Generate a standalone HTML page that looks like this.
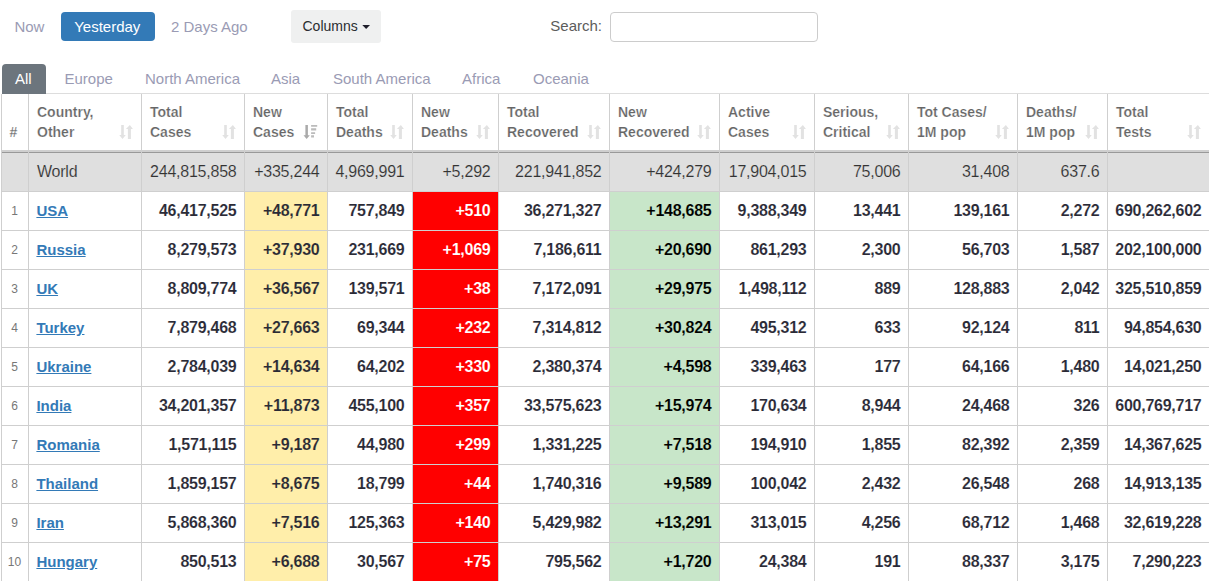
<!DOCTYPE html>
<html><head><meta charset="utf-8"><style>
*{box-sizing:border-box}
html,body{margin:0;padding:0;background:#fff;overflow:hidden}
body{width:1209px;height:581px;position:relative;font-family:"Liberation Sans",sans-serif;}
.a{position:absolute}
.txt{position:absolute;white-space:nowrap;line-height:20px}
.nav{font-size:15px;color:#9a9bb4}
.btn{position:absolute;border-radius:4px}
.hd{position:absolute;font-size:14px;font-weight:bold;color:#666;-webkit-text-stroke:0.2px #fff;line-height:20px;white-space:nowrap}
.vl{position:absolute;width:1px;background:#cfcfcf}
.hl{position:absolute;height:1px;background:#cfcfcf}
.c{position:absolute;white-space:nowrap;text-align:right;font-size:16px;letter-spacing:-0.25px;font-weight:bold;color:#2a2a36;line-height:20px}
.w{font-weight:normal;color:#333;letter-spacing:-0.23px;-webkit-text-stroke:0.15px #dfdfdf}
.n{position:absolute;font-size:12px;color:#777;text-align:center;line-height:20px}
.ct{position:absolute;white-space:nowrap;font-size:15px;font-weight:bold;color:#337ab7;text-decoration:underline;line-height:20px}
svg{position:absolute}
</style></head><body>

<div class="txt nav" style="left:14.4px;top:17px">Now</div>
<div class="btn" style="left:61px;top:12px;width:94px;height:29px;background:#337ab7"></div>
<div class="txt" style="left:74.2px;top:17px;font-size:15px;color:#fff">Yesterday</div>
<div class="txt nav" style="left:171px;top:17px">2 Days Ago</div>
<div class="btn" style="left:291px;top:10px;width:90px;height:33px;background:#eff0f0;border-radius:3px"></div>
<div class="txt" style="left:302.5px;top:16px;font-size:14px;color:#2a2d31">Columns</div>
<svg style="left:362px;top:25px" width="9" height="6"><path d="M0.3 0 L8 0 L4.15 4 Z" fill="#1e1e2a"/></svg>
<div class="txt" style="left:550.3px;top:16px;font-size:15px;color:#5c5c5c">Search:</div>
<div class="a" style="left:610px;top:12px;width:208px;height:30px;border:1px solid #ccc;border-radius:4px"></div>
<div class="txt nav" style="left:64.5px;top:69px">Europe</div>
<div class="txt nav" style="left:145px;top:69px">North America</div>
<div class="txt nav" style="left:271px;top:69px">Asia</div>
<div class="txt nav" style="left:333px;top:69px">South America</div>
<div class="txt nav" style="left:462px;top:69px">Africa</div>
<div class="txt nav" style="left:533px;top:69px">Oceania</div>
<div class="a" style="left:2px;top:153px;width:1207px;height:38px;background:#dfdfdf"></div>
<div class="a" style="left:245px;top:191px;width:82px;height:390px;background:#ffeeaa"></div>
<div class="a" style="left:413px;top:191px;width:85px;height:390px;background:#ff0000"></div>
<div class="a" style="left:610px;top:191px;width:109px;height:390px;background:#c8e6c9"></div>
<div class="hl" style="left:2px;top:93px;width:1207px;background:#ddd"></div>
<div class="a" style="left:2px;top:150px;width:1207px;height:2px;background:#cfcfcf"></div>
<div class="a" style="left:2px;top:152px;width:1207px;height:1px;background:#999"></div>
<div class="hl" style="left:2px;top:191px;width:1207px"></div>
<div class="hl" style="left:2px;top:230px;width:1207px"></div>
<div class="hl" style="left:2px;top:269px;width:1207px"></div>
<div class="hl" style="left:2px;top:308px;width:1207px"></div>
<div class="hl" style="left:2px;top:347px;width:1207px"></div>
<div class="hl" style="left:2px;top:386px;width:1207px"></div>
<div class="hl" style="left:2px;top:425px;width:1207px"></div>
<div class="hl" style="left:2px;top:464px;width:1207px"></div>
<div class="hl" style="left:2px;top:503px;width:1207px"></div>
<div class="hl" style="left:2px;top:542px;width:1207px"></div>
<div class="hl" style="left:2px;top:581px;width:1207px"></div>
<div class="vl" style="left:1px;top:94px;height:487px"></div>
<div class="vl" style="left:28px;top:94px;height:487px"></div>
<div class="vl" style="left:141px;top:94px;height:487px"></div>
<div class="vl" style="left:244px;top:94px;height:487px"></div>
<div class="vl" style="left:327px;top:94px;height:487px"></div>
<div class="vl" style="left:412px;top:94px;height:487px"></div>
<div class="vl" style="left:498px;top:94px;height:487px"></div>
<div class="vl" style="left:609px;top:94px;height:487px"></div>
<div class="vl" style="left:719px;top:94px;height:487px"></div>
<div class="vl" style="left:814px;top:94px;height:487px"></div>
<div class="vl" style="left:908px;top:94px;height:487px"></div>
<div class="vl" style="left:1017px;top:94px;height:487px"></div>
<div class="vl" style="left:1107px;top:94px;height:487px"></div>
<div class="a" style="left:2px;top:64px;width:44px;height:30px;background:#6c757d;border-radius:4px 4px 0 0"></div>
<div class="txt" style="left:15px;top:69px;font-size:15px;color:#fff">All</div>
<div class="hd" style="left:0px;width:27px;top:122px;text-align:center">#</div>
<div class="hd" style="left:37px;top:102px">Country,<br>Other</div>
<div class="a" style="left:119px;top:125px;width:16px;height:15px"><svg width="16" height="15" viewBox="0 0 16 15"><path d="M2.2 0H4.8V10H6.8L3.5 14L0.2 10H2.2Z" fill="#e2e2e2"/><path d="M8.9 14H11.9V4H13.9L10.9 0L6.9 4H8.9Z" fill="#e2e2e2"/></svg></div>
<div class="hd" style="left:150px;top:102px">Total<br>Cases</div>
<div class="a" style="left:222px;top:125px;width:16px;height:15px"><svg width="16" height="15" viewBox="0 0 16 15"><path d="M2.2 0H4.8V10H6.8L3.5 14L0.2 10H2.2Z" fill="#e2e2e2"/><path d="M8.9 14H11.9V4H13.9L10.9 0L6.9 4H8.9Z" fill="#e2e2e2"/></svg></div>
<div class="hd" style="left:253px;top:102px">New<br>Cases</div>
<div class="a" style="left:303px;top:125px;width:16px;height:15px"><svg width="16" height="15" viewBox="0 0 16 15"><path d="M2.4 0H4.9V10.3H6.8L3.65 14L0.5 10.3H2.4Z" fill="#aaa"/><path d="M8.1 0H14.2V1.8H8.1ZM8.1 3.2H13.2V5.6H8.1ZM8.1 7.2H12.1V9H8.1ZM8.1 10.3H11V12.5H8.1Z" fill="#bbb"/></svg></div>
<div class="hd" style="left:336px;top:102px">Total<br>Deaths</div>
<div class="a" style="left:390px;top:125px;width:16px;height:15px"><svg width="16" height="15" viewBox="0 0 16 15"><path d="M2.2 0H4.8V10H6.8L3.5 14L0.2 10H2.2Z" fill="#e2e2e2"/><path d="M8.9 14H11.9V4H13.9L10.9 0L6.9 4H8.9Z" fill="#e2e2e2"/></svg></div>
<div class="hd" style="left:421px;top:102px">New<br>Deaths</div>
<div class="a" style="left:476px;top:125px;width:16px;height:15px"><svg width="16" height="15" viewBox="0 0 16 15"><path d="M2.2 0H4.8V10H6.8L3.5 14L0.2 10H2.2Z" fill="#e2e2e2"/><path d="M8.9 14H11.9V4H13.9L10.9 0L6.9 4H8.9Z" fill="#e2e2e2"/></svg></div>
<div class="hd" style="left:507px;top:102px">Total<br>Recovered</div>
<div class="a" style="left:587px;top:125px;width:16px;height:15px"><svg width="16" height="15" viewBox="0 0 16 15"><path d="M2.2 0H4.8V10H6.8L3.5 14L0.2 10H2.2Z" fill="#e2e2e2"/><path d="M8.9 14H11.9V4H13.9L10.9 0L6.9 4H8.9Z" fill="#e2e2e2"/></svg></div>
<div class="hd" style="left:618px;top:102px">New<br>Recovered</div>
<div class="a" style="left:697px;top:125px;width:16px;height:15px"><svg width="16" height="15" viewBox="0 0 16 15"><path d="M2.2 0H4.8V10H6.8L3.5 14L0.2 10H2.2Z" fill="#e2e2e2"/><path d="M8.9 14H11.9V4H13.9L10.9 0L6.9 4H8.9Z" fill="#e2e2e2"/></svg></div>
<div class="hd" style="left:728px;top:102px">Active<br>Cases</div>
<div class="a" style="left:792px;top:125px;width:16px;height:15px"><svg width="16" height="15" viewBox="0 0 16 15"><path d="M2.2 0H4.8V10H6.8L3.5 14L0.2 10H2.2Z" fill="#e2e2e2"/><path d="M8.9 14H11.9V4H13.9L10.9 0L6.9 4H8.9Z" fill="#e2e2e2"/></svg></div>
<div class="hd" style="left:823px;top:102px">Serious,<br>Critical</div>
<div class="a" style="left:886px;top:125px;width:16px;height:15px"><svg width="16" height="15" viewBox="0 0 16 15"><path d="M2.2 0H4.8V10H6.8L3.5 14L0.2 10H2.2Z" fill="#e2e2e2"/><path d="M8.9 14H11.9V4H13.9L10.9 0L6.9 4H8.9Z" fill="#e2e2e2"/></svg></div>
<div class="hd" style="left:917px;top:102px">Tot&nbsp;Cases/<br>1M pop</div>
<div class="a" style="left:995px;top:125px;width:16px;height:15px"><svg width="16" height="15" viewBox="0 0 16 15"><path d="M2.2 0H4.8V10H6.8L3.5 14L0.2 10H2.2Z" fill="#e2e2e2"/><path d="M8.9 14H11.9V4H13.9L10.9 0L6.9 4H8.9Z" fill="#e2e2e2"/></svg></div>
<div class="hd" style="left:1026px;top:102px">Deaths/<br>1M pop</div>
<div class="a" style="left:1085px;top:125px;width:16px;height:15px"><svg width="16" height="15" viewBox="0 0 16 15"><path d="M2.2 0H4.8V10H6.8L3.5 14L0.2 10H2.2Z" fill="#e2e2e2"/><path d="M8.9 14H11.9V4H13.9L10.9 0L6.9 4H8.9Z" fill="#e2e2e2"/></svg></div>
<div class="hd" style="left:1116px;top:102px">Total<br>Tests</div>
<div class="a" style="left:1187px;top:125px;width:16px;height:15px"><svg width="16" height="15" viewBox="0 0 16 15"><path d="M2.2 0H4.8V10H6.8L3.5 14L0.2 10H2.2Z" fill="#e2e2e2"/><path d="M8.9 14H11.9V4H13.9L10.9 0L6.9 4H8.9Z" fill="#e2e2e2"/></svg></div>
<div class="c w" style="left:37px;top:162px;text-align:left">World</div>
<div class="c w" style="right:972.5px;top:162px">244,815,858</div>
<div class="c w" style="right:889.5px;top:162px">+335,244</div>
<div class="c w" style="right:804.5px;top:162px">4,969,991</div>
<div class="c w" style="right:718.5px;top:162px">+5,292</div>
<div class="c w" style="right:607.5px;top:162px">221,941,852</div>
<div class="c w" style="right:497.5px;top:162px">+424,279</div>
<div class="c w" style="right:402.5px;top:162px">17,904,015</div>
<div class="c w" style="right:308.5px;top:162px">75,006</div>
<div class="c w" style="right:199.5px;top:162px">31,408</div>
<div class="c w" style="right:109.5px;top:162px">637.6</div>
<div class="n" style="left:1px;width:27px;top:201px">1</div>
<a class="ct" style="left:36.4px;top:201px">USA</a>
<div class="c" style="right:972.5px;top:201px;-webkit-text-stroke:0.1px #fff">46,417,525</div>
<div class="c" style="right:889.5px;top:201px;-webkit-text-stroke:0.1px #ffeeaa">+48,771</div>
<div class="c" style="right:804.5px;top:201px;-webkit-text-stroke:0.1px #fff">757,849</div>
<div class="c" style="right:718.5px;top:201px;color:#fff;-webkit-text-stroke:0.1px #ff0000">+510</div>
<div class="c" style="right:607.5px;top:201px;-webkit-text-stroke:0.1px #fff">36,271,327</div>
<div class="c" style="right:497.5px;top:201px;color:#000;-webkit-text-stroke:0.1px #c8e6c9">+148,685</div>
<div class="c" style="right:402.5px;top:201px;-webkit-text-stroke:0.1px #fff">9,388,349</div>
<div class="c" style="right:308.5px;top:201px;-webkit-text-stroke:0.1px #fff">13,441</div>
<div class="c" style="right:199.5px;top:201px;-webkit-text-stroke:0.1px #fff">139,161</div>
<div class="c" style="right:109.5px;top:201px;-webkit-text-stroke:0.1px #fff">2,272</div>
<div class="c" style="right:7.5px;top:201px;-webkit-text-stroke:0.1px #fff">690,262,602</div>
<div class="n" style="left:1px;width:27px;top:240px">2</div>
<a class="ct" style="left:36.4px;top:240px">Russia</a>
<div class="c" style="right:972.5px;top:240px;-webkit-text-stroke:0.1px #fff">8,279,573</div>
<div class="c" style="right:889.5px;top:240px;-webkit-text-stroke:0.1px #ffeeaa">+37,930</div>
<div class="c" style="right:804.5px;top:240px;-webkit-text-stroke:0.1px #fff">231,669</div>
<div class="c" style="right:718.5px;top:240px;color:#fff;-webkit-text-stroke:0.1px #ff0000">+1,069</div>
<div class="c" style="right:607.5px;top:240px;-webkit-text-stroke:0.1px #fff">7,186,611</div>
<div class="c" style="right:497.5px;top:240px;color:#000;-webkit-text-stroke:0.1px #c8e6c9">+20,690</div>
<div class="c" style="right:402.5px;top:240px;-webkit-text-stroke:0.1px #fff">861,293</div>
<div class="c" style="right:308.5px;top:240px;-webkit-text-stroke:0.1px #fff">2,300</div>
<div class="c" style="right:199.5px;top:240px;-webkit-text-stroke:0.1px #fff">56,703</div>
<div class="c" style="right:109.5px;top:240px;-webkit-text-stroke:0.1px #fff">1,587</div>
<div class="c" style="right:7.5px;top:240px;-webkit-text-stroke:0.1px #fff">202,100,000</div>
<div class="n" style="left:1px;width:27px;top:279px">3</div>
<a class="ct" style="left:36.4px;top:279px">UK</a>
<div class="c" style="right:972.5px;top:279px;-webkit-text-stroke:0.1px #fff">8,809,774</div>
<div class="c" style="right:889.5px;top:279px;-webkit-text-stroke:0.1px #ffeeaa">+36,567</div>
<div class="c" style="right:804.5px;top:279px;-webkit-text-stroke:0.1px #fff">139,571</div>
<div class="c" style="right:718.5px;top:279px;color:#fff;-webkit-text-stroke:0.1px #ff0000">+38</div>
<div class="c" style="right:607.5px;top:279px;-webkit-text-stroke:0.1px #fff">7,172,091</div>
<div class="c" style="right:497.5px;top:279px;color:#000;-webkit-text-stroke:0.1px #c8e6c9">+29,975</div>
<div class="c" style="right:402.5px;top:279px;-webkit-text-stroke:0.1px #fff">1,498,112</div>
<div class="c" style="right:308.5px;top:279px;-webkit-text-stroke:0.1px #fff">889</div>
<div class="c" style="right:199.5px;top:279px;-webkit-text-stroke:0.1px #fff">128,883</div>
<div class="c" style="right:109.5px;top:279px;-webkit-text-stroke:0.1px #fff">2,042</div>
<div class="c" style="right:7.5px;top:279px;-webkit-text-stroke:0.1px #fff">325,510,859</div>
<div class="n" style="left:1px;width:27px;top:318px">4</div>
<a class="ct" style="left:36.4px;top:318px">Turkey</a>
<div class="c" style="right:972.5px;top:318px;-webkit-text-stroke:0.1px #fff">7,879,468</div>
<div class="c" style="right:889.5px;top:318px;-webkit-text-stroke:0.1px #ffeeaa">+27,663</div>
<div class="c" style="right:804.5px;top:318px;-webkit-text-stroke:0.1px #fff">69,344</div>
<div class="c" style="right:718.5px;top:318px;color:#fff;-webkit-text-stroke:0.1px #ff0000">+232</div>
<div class="c" style="right:607.5px;top:318px;-webkit-text-stroke:0.1px #fff">7,314,812</div>
<div class="c" style="right:497.5px;top:318px;color:#000;-webkit-text-stroke:0.1px #c8e6c9">+30,824</div>
<div class="c" style="right:402.5px;top:318px;-webkit-text-stroke:0.1px #fff">495,312</div>
<div class="c" style="right:308.5px;top:318px;-webkit-text-stroke:0.1px #fff">633</div>
<div class="c" style="right:199.5px;top:318px;-webkit-text-stroke:0.1px #fff">92,124</div>
<div class="c" style="right:109.5px;top:318px;-webkit-text-stroke:0.1px #fff">811</div>
<div class="c" style="right:7.5px;top:318px;-webkit-text-stroke:0.1px #fff">94,854,630</div>
<div class="n" style="left:1px;width:27px;top:357px">5</div>
<a class="ct" style="left:36.4px;top:357px">Ukraine</a>
<div class="c" style="right:972.5px;top:357px;-webkit-text-stroke:0.1px #fff">2,784,039</div>
<div class="c" style="right:889.5px;top:357px;-webkit-text-stroke:0.1px #ffeeaa">+14,634</div>
<div class="c" style="right:804.5px;top:357px;-webkit-text-stroke:0.1px #fff">64,202</div>
<div class="c" style="right:718.5px;top:357px;color:#fff;-webkit-text-stroke:0.1px #ff0000">+330</div>
<div class="c" style="right:607.5px;top:357px;-webkit-text-stroke:0.1px #fff">2,380,374</div>
<div class="c" style="right:497.5px;top:357px;color:#000;-webkit-text-stroke:0.1px #c8e6c9">+4,598</div>
<div class="c" style="right:402.5px;top:357px;-webkit-text-stroke:0.1px #fff">339,463</div>
<div class="c" style="right:308.5px;top:357px;-webkit-text-stroke:0.1px #fff">177</div>
<div class="c" style="right:199.5px;top:357px;-webkit-text-stroke:0.1px #fff">64,166</div>
<div class="c" style="right:109.5px;top:357px;-webkit-text-stroke:0.1px #fff">1,480</div>
<div class="c" style="right:7.5px;top:357px;-webkit-text-stroke:0.1px #fff">14,021,250</div>
<div class="n" style="left:1px;width:27px;top:396px">6</div>
<a class="ct" style="left:36.4px;top:396px">India</a>
<div class="c" style="right:972.5px;top:396px;-webkit-text-stroke:0.1px #fff">34,201,357</div>
<div class="c" style="right:889.5px;top:396px;-webkit-text-stroke:0.1px #ffeeaa">+11,873</div>
<div class="c" style="right:804.5px;top:396px;-webkit-text-stroke:0.1px #fff">455,100</div>
<div class="c" style="right:718.5px;top:396px;color:#fff;-webkit-text-stroke:0.1px #ff0000">+357</div>
<div class="c" style="right:607.5px;top:396px;-webkit-text-stroke:0.1px #fff">33,575,623</div>
<div class="c" style="right:497.5px;top:396px;color:#000;-webkit-text-stroke:0.1px #c8e6c9">+15,974</div>
<div class="c" style="right:402.5px;top:396px;-webkit-text-stroke:0.1px #fff">170,634</div>
<div class="c" style="right:308.5px;top:396px;-webkit-text-stroke:0.1px #fff">8,944</div>
<div class="c" style="right:199.5px;top:396px;-webkit-text-stroke:0.1px #fff">24,468</div>
<div class="c" style="right:109.5px;top:396px;-webkit-text-stroke:0.1px #fff">326</div>
<div class="c" style="right:7.5px;top:396px;-webkit-text-stroke:0.1px #fff">600,769,717</div>
<div class="n" style="left:1px;width:27px;top:435px">7</div>
<a class="ct" style="left:36.4px;top:435px">Romania</a>
<div class="c" style="right:972.5px;top:435px;-webkit-text-stroke:0.1px #fff">1,571,115</div>
<div class="c" style="right:889.5px;top:435px;-webkit-text-stroke:0.1px #ffeeaa">+9,187</div>
<div class="c" style="right:804.5px;top:435px;-webkit-text-stroke:0.1px #fff">44,980</div>
<div class="c" style="right:718.5px;top:435px;color:#fff;-webkit-text-stroke:0.1px #ff0000">+299</div>
<div class="c" style="right:607.5px;top:435px;-webkit-text-stroke:0.1px #fff">1,331,225</div>
<div class="c" style="right:497.5px;top:435px;color:#000;-webkit-text-stroke:0.1px #c8e6c9">+7,518</div>
<div class="c" style="right:402.5px;top:435px;-webkit-text-stroke:0.1px #fff">194,910</div>
<div class="c" style="right:308.5px;top:435px;-webkit-text-stroke:0.1px #fff">1,855</div>
<div class="c" style="right:199.5px;top:435px;-webkit-text-stroke:0.1px #fff">82,392</div>
<div class="c" style="right:109.5px;top:435px;-webkit-text-stroke:0.1px #fff">2,359</div>
<div class="c" style="right:7.5px;top:435px;-webkit-text-stroke:0.1px #fff">14,367,625</div>
<div class="n" style="left:1px;width:27px;top:474px">8</div>
<a class="ct" style="left:36.4px;top:474px">Thailand</a>
<div class="c" style="right:972.5px;top:474px;-webkit-text-stroke:0.1px #fff">1,859,157</div>
<div class="c" style="right:889.5px;top:474px;-webkit-text-stroke:0.1px #ffeeaa">+8,675</div>
<div class="c" style="right:804.5px;top:474px;-webkit-text-stroke:0.1px #fff">18,799</div>
<div class="c" style="right:718.5px;top:474px;color:#fff;-webkit-text-stroke:0.1px #ff0000">+44</div>
<div class="c" style="right:607.5px;top:474px;-webkit-text-stroke:0.1px #fff">1,740,316</div>
<div class="c" style="right:497.5px;top:474px;color:#000;-webkit-text-stroke:0.1px #c8e6c9">+9,589</div>
<div class="c" style="right:402.5px;top:474px;-webkit-text-stroke:0.1px #fff">100,042</div>
<div class="c" style="right:308.5px;top:474px;-webkit-text-stroke:0.1px #fff">2,432</div>
<div class="c" style="right:199.5px;top:474px;-webkit-text-stroke:0.1px #fff">26,548</div>
<div class="c" style="right:109.5px;top:474px;-webkit-text-stroke:0.1px #fff">268</div>
<div class="c" style="right:7.5px;top:474px;-webkit-text-stroke:0.1px #fff">14,913,135</div>
<div class="n" style="left:1px;width:27px;top:513px">9</div>
<a class="ct" style="left:36.4px;top:513px">Iran</a>
<div class="c" style="right:972.5px;top:513px;-webkit-text-stroke:0.1px #fff">5,868,360</div>
<div class="c" style="right:889.5px;top:513px;-webkit-text-stroke:0.1px #ffeeaa">+7,516</div>
<div class="c" style="right:804.5px;top:513px;-webkit-text-stroke:0.1px #fff">125,363</div>
<div class="c" style="right:718.5px;top:513px;color:#fff;-webkit-text-stroke:0.1px #ff0000">+140</div>
<div class="c" style="right:607.5px;top:513px;-webkit-text-stroke:0.1px #fff">5,429,982</div>
<div class="c" style="right:497.5px;top:513px;color:#000;-webkit-text-stroke:0.1px #c8e6c9">+13,291</div>
<div class="c" style="right:402.5px;top:513px;-webkit-text-stroke:0.1px #fff">313,015</div>
<div class="c" style="right:308.5px;top:513px;-webkit-text-stroke:0.1px #fff">4,256</div>
<div class="c" style="right:199.5px;top:513px;-webkit-text-stroke:0.1px #fff">68,712</div>
<div class="c" style="right:109.5px;top:513px;-webkit-text-stroke:0.1px #fff">1,468</div>
<div class="c" style="right:7.5px;top:513px;-webkit-text-stroke:0.1px #fff">32,619,228</div>
<div class="n" style="left:1px;width:27px;top:552px">10</div>
<a class="ct" style="left:36.4px;top:552px">Hungary</a>
<div class="c" style="right:972.5px;top:552px;-webkit-text-stroke:0.1px #fff">850,513</div>
<div class="c" style="right:889.5px;top:552px;-webkit-text-stroke:0.1px #ffeeaa">+6,688</div>
<div class="c" style="right:804.5px;top:552px;-webkit-text-stroke:0.1px #fff">30,567</div>
<div class="c" style="right:718.5px;top:552px;color:#fff;-webkit-text-stroke:0.1px #ff0000">+75</div>
<div class="c" style="right:607.5px;top:552px;-webkit-text-stroke:0.1px #fff">795,562</div>
<div class="c" style="right:497.5px;top:552px;color:#000;-webkit-text-stroke:0.1px #c8e6c9">+1,720</div>
<div class="c" style="right:402.5px;top:552px;-webkit-text-stroke:0.1px #fff">24,384</div>
<div class="c" style="right:308.5px;top:552px;-webkit-text-stroke:0.1px #fff">191</div>
<div class="c" style="right:199.5px;top:552px;-webkit-text-stroke:0.1px #fff">88,337</div>
<div class="c" style="right:109.5px;top:552px;-webkit-text-stroke:0.1px #fff">3,175</div>
<div class="c" style="right:7.5px;top:552px;-webkit-text-stroke:0.1px #fff">7,290,223</div>
</body></html>
